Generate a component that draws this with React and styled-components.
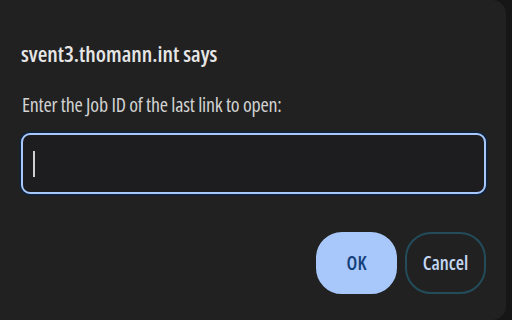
import React from "react";
import styled, { createGlobalStyle } from "styled-components";

const Global = createGlobalStyle`
  body {
    margin: 0;
    background: #161616;
    font-family: "Open Sans", "Noto Sans", sans-serif;
    font-stretch: condensed;
  }
`;

const Page = styled.div`
  display: flex;
  height: 320px;
  width: 512px;
  overflow: hidden;
`;

const Dialog = styled.div`
  width: 506px;
  height: 320px;
  box-sizing: border-box;
  background: #212121;
  border-radius: 0 14px 14px 0;
  padding: 38px 20px 0 21px;
  display: flex;
  flex-direction: column;
`;

const Title = styled.h1`
  margin: 0;
  font-size: 22px;
  font-weight: 600;
  line-height: 30px;
  color: #e6e6e6;
`;

const Message = styled.p`
  margin: 23px 0 0 1px;
  font-size: 20px;
  line-height: 28px;
  letter-spacing: -0.2px;
  color: #d2d2d2;
`;

const Field = styled.div`
  margin-top: 14px;
  height: 61px;
  box-sizing: border-box;
  border: 2.5px solid #a8c7fa;
  border-radius: 9px;
  box-shadow: 0 0 0 1.5px #0d2440;
  background: #1d1d1f;
  display: flex;
  align-items: center;
  padding-left: 10px;
`;

const Caret = styled.span`
  width: 2px;
  height: 26px;
  background: #cfcfcf;
`;

const Actions = styled.div`
  margin-top: 38px;
  display: flex;
  justify-content: flex-end;
  gap: 8px;
`;

const Button = styled.button`
  width: 81px;
  height: 62px;
  border-radius: 26px;
  font-family: inherit;
  font-stretch: condensed;
  font-size: 19px;
  font-weight: 600;
  cursor: pointer;
  border: 2px solid ${(p) => (p.$primary ? "#a8c7fa" : "#234c5b")};
  background: ${(p) => (p.$primary ? "#a8c7fa" : "transparent")};
  color: ${(p) => (p.$primary ? "#14407a" : "#c4d7f2")};
`;

export default function App() {
  return (
    <Page>
      <Global />
      <Dialog>
        <Title>svent3.thomann.int says</Title>
        <Message>Enter the Job ID of the last link to open:</Message>
        <Field>
          <Caret />
        </Field>
        <Actions>
          <Button $primary>OK</Button>
          <Button>Cancel</Button>
        </Actions>
      </Dialog>
    </Page>
  );
}
